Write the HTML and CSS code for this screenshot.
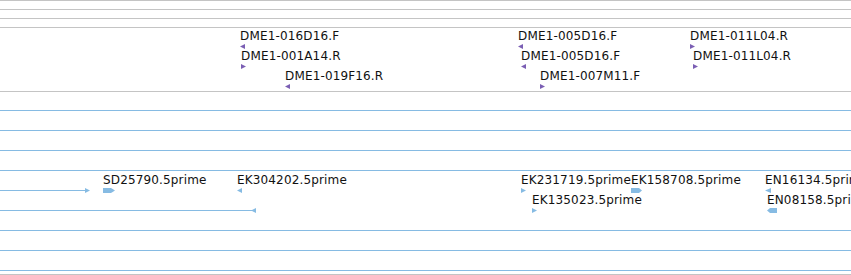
FILE: index.html
```html
<!DOCTYPE html>
<html lang="en">
<head>
    <meta charset="UTF-8">
    <title>Track view</title>
    <link rel="stylesheet" href="styles.css">
</head>
<body>
    <div class="ruler">
        <div class="ruler-row"></div>
        <div class="ruler-row"></div>
        <div class="ruler-row"></div>
    </div>

    <!-- DME clone ends -->
    <div class="track track-dme">
        <div class="row">
            <div class="feat" style="left:240px">
                <span class="label">DME1-016D16.F</span>
                <svg class="glyph" width="6" height="5"><polygon points="5,0 0,2.5 5,5"/></svg>
            </div>
            <div class="feat" style="left:518px">
                <span class="label">DME1-005D16.F</span>
                <svg class="glyph" width="6" height="5"><polygon points="5,0 0,2.5 5,5"/></svg>
            </div>
            <div class="feat" style="left:690px">
                <span class="label">DME1-011L04.R</span>
                <svg class="glyph" width="6" height="5"><polygon points="0,0 5,2.5 0,5"/></svg>
            </div>
        </div>
        <div class="row">
            <div class="feat" style="left:241px">
                <span class="label">DME1-001A14.R</span>
                <svg class="glyph" width="6" height="5"><polygon points="0,0 5,2.5 0,5"/></svg>
            </div>
            <div class="feat" style="left:521px">
                <span class="label">DME1-005D16.F</span>
                <svg class="glyph" width="6" height="5"><polygon points="5,0 0,2.5 5,5"/></svg>
            </div>
            <div class="feat" style="left:693px">
                <span class="label">DME1-011L04.R</span>
                <svg class="glyph" width="6" height="5"><polygon points="0,0 5,2.5 0,5"/></svg>
            </div>
        </div>
        <div class="row">
            <div class="feat" style="left:285px">
                <span class="label">DME1-019F16.R</span>
                <svg class="glyph" width="6" height="5"><polygon points="5,0 0,2.5 5,5"/></svg>
            </div>
            <div class="feat" style="left:540px">
                <span class="label">DME1-007M11.F</span>
                <svg class="glyph" width="6" height="5"><polygon points="0,0 5,2.5 0,5"/></svg>
            </div>
        </div>
    </div>

    <!-- EST alignments -->
    <div class="track track-est">
        <div class="row full"></div>
        <div class="row full"></div>
        <div class="row full"></div>
        <div class="row full"></div>
        <div class="row">
            <div class="feat" style="left:0">
                <span class="label">&nbsp;</span>
                <svg class="glyph" width="91" height="5"><rect x="0" y="2" width="85" height="1"/><polygon points="85,0 90,2.5 85,5"/></svg>
            </div>
            <div class="feat" style="left:103px">
                <span class="label">SD25790.5prime</span>
                <svg class="glyph" width="13" height="5"><polygon points="0,0 8,0 12,2.5 8,5 0,5"/></svg>
            </div>
            <div class="feat" style="left:237px">
                <span class="label">EK304202.5prime</span>
                <svg class="glyph" width="6" height="5"><polygon points="5,0 0,2.5 5,5"/></svg>
            </div>
            <div class="feat" style="left:521px">
                <span class="label">EK231719.5prime</span>
                <svg class="glyph" width="6" height="5"><polygon points="0,0 5,2.5 0,5"/></svg>
            </div>
            <div class="feat" style="left:631px">
                <span class="label">EK158708.5prime</span>
                <svg class="glyph" width="12" height="5"><polygon points="0,0 8,0 11,2.5 8,5 0,5"/></svg>
            </div>
            <div class="feat" style="left:765px">
                <span class="label">EN16134.5prime</span>
                <svg class="glyph" width="7" height="5"><polygon points="6,0 0,2.5 6,5"/></svg>
            </div>
        </div>
        <div class="row">
            <div class="feat" style="left:0">
                <span class="label">&nbsp;</span>
                <svg class="glyph" width="257" height="5"><rect x="0" y="2" width="252" height="1"/><polygon points="256,0 251,2.5 256,5"/></svg>
            </div>
            <div class="feat" style="left:532px">
                <span class="label">EK135023.5prime</span>
                <svg class="glyph" width="6" height="5"><polygon points="0,0 5,2.5 0,5"/></svg>
            </div>
            <div class="feat" style="left:767px">
                <span class="label">EN08158.5prime</span>
                <svg class="glyph" width="11" height="5"><polygon points="3,0 10,0 10,5 3,5 0,2.5"/></svg>
            </div>
        </div>
        <div class="row full"></div>
        <div class="row full"></div>
        <div class="row full"></div>
    </div>
</body>
</html>
```

FILE: styles.css
```css
body {
    margin: 0;
    width: 851px;
    height: 275px;
    overflow: hidden;
    background-color: #fff;
    font-family: "DejaVu Sans", sans-serif;
    font-size: 12px;
    color: #111;
}
/* ruler */
.ruler-row {
    height: 8px;
    border-top: 1px solid #c4c4c4;
}
/* tracks */
.track {
    border-top: 1px solid #c4c4c4;
}
.track-dme {
    padding-bottom: 3px;
}
.track-dme .glyph {
    fill: #7b5fb4;
}
.track-est {
    padding-bottom: 2px;
    border-bottom: 1px solid #c4c4c4;
}
.track-est .glyph {
    fill: #86bbe3;
}
.row {
    position: relative;
    height: 20px;
}
.row.full {
    background: linear-gradient(#86bbe3, #86bbe3) 0 18px / 100% 1px no-repeat;
}
.feat {
    position: absolute;
    top: 0;
    display: flex;
    flex-direction: column;
    align-items: flex-start;
}
.label {
    display: block;
    margin-top: 1px;
    line-height: 14px;
    letter-spacing: 0.15px;
    white-space: nowrap;
}
.glyph {
    display: block;
    margin-top: 1px;
}
```
